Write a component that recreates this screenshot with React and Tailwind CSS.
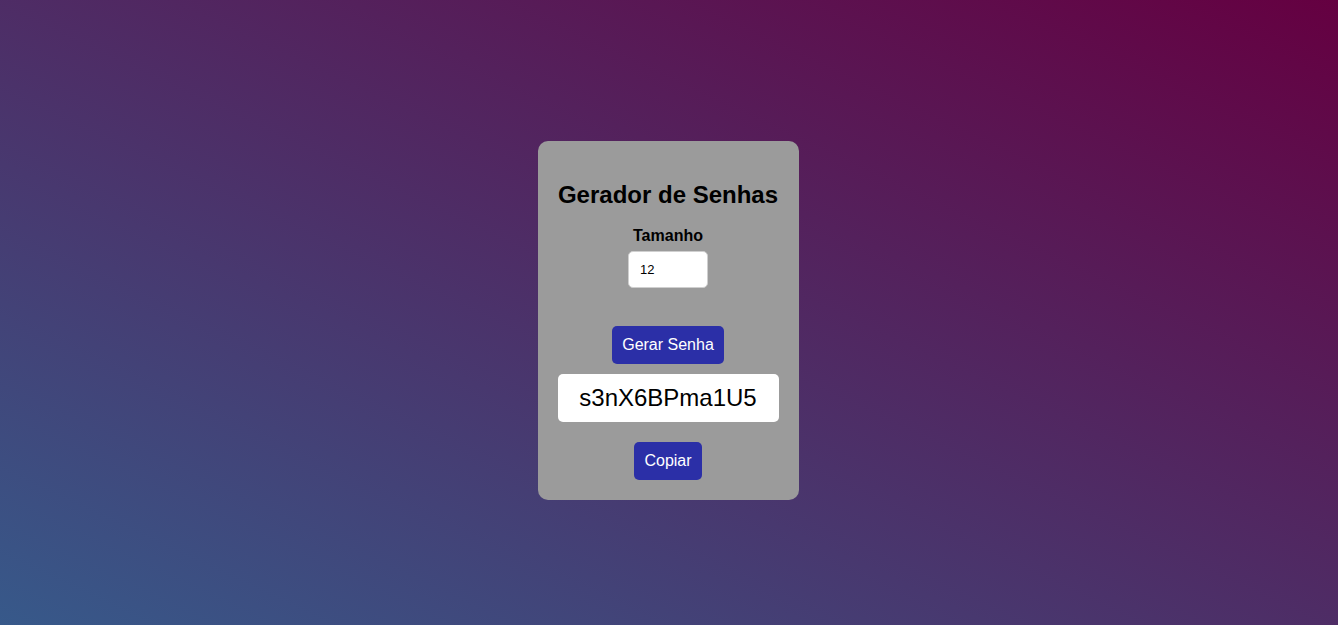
import { useState } from "react";

export default function App() {
  const [size, setSize] = useState("12");
  const [password] = useState("s3nX6BPma1U5");

  return (
    <div className="flex min-h-[625px] w-full items-center justify-center bg-[linear-gradient(to_top_right,#37598a,#650041)] pt-[15px] pr-[2px] font-['Liberation_Sans',Arial,sans-serif]">
      {/* card */}
      <div className="flex w-[261px] flex-col items-center rounded-[10px] bg-[#9b9b9b] px-5 pt-5 pb-5">
        <h1 className="mt-5 text-center text-[24px] leading-[28px] font-bold text-black">
          Gerador de Senhas
        </h1>
        <label className="mt-[18px] text-[16px] leading-[18px] font-bold text-black">
          Tamanho
        </label>
        <input
          type="number"
          value={size}
          onChange={(e) => setSize(e.target.value)}
          className="mt-[6px] h-[37px] w-[80px] rounded-[5px] border border-[#cfcfcf] bg-white px-[11px] text-[13px] text-black outline-none"
        />
        <button className="mt-[38px] h-[38px] rounded-[5px] bg-[#2b2fa7] px-[10px] text-[16px] text-white">
          Gerar Senha
        </button>
        {/* result */}
        <div className="mt-[10px] flex h-[48px] w-full items-center justify-center rounded-[5px] bg-white text-[24px] text-black">
          {password}
        </div>
        <button className="mt-5 h-[38px] rounded-[5px] bg-[#2b2fa7] px-[10px] text-[16px] text-white">
          Copiar
        </button>
      </div>
    </div>
  );
}
